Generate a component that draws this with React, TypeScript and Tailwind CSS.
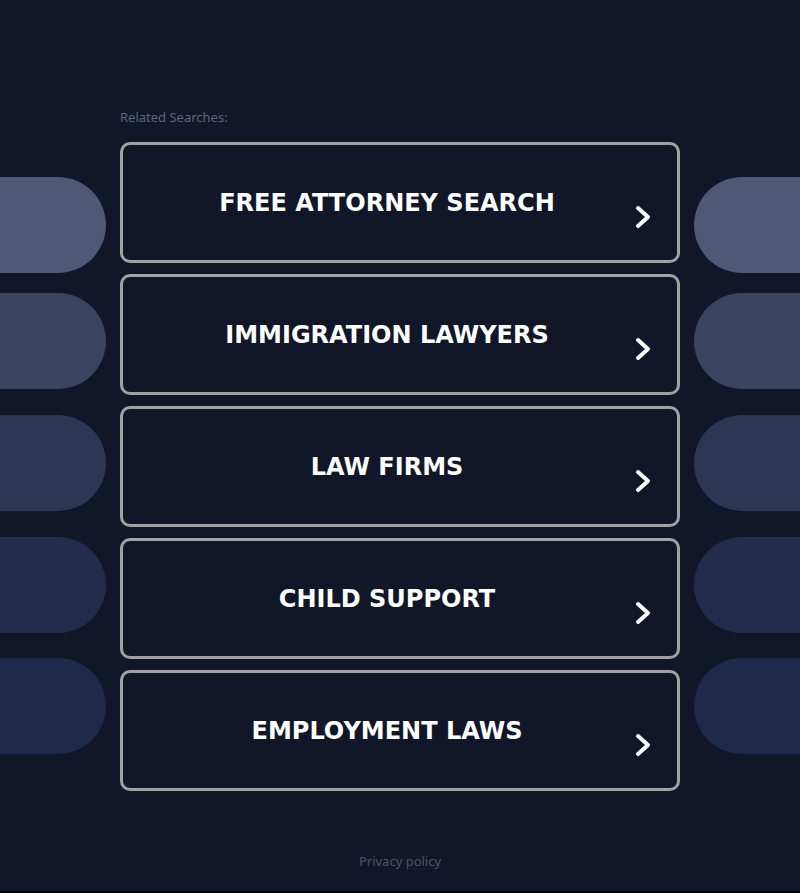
const searches = [
  'FREE ATTORNEY SEARCH',
  'IMMIGRATION LAWYERS',
  'LAW FIRMS',
  'CHILD SUPPORT',
  'EMPLOYMENT LAWS',
]

const pills = [
  { color: 'bg-[#4f5874]', mt: 'mt-[177px]' },
  { color: 'bg-[#3b445f]', mt: 'mt-[20px]' },
  { color: 'bg-[#2d3653]', mt: 'mt-[26px]' },
  { color: 'bg-[#232c4c]', mt: 'mt-[26px]' },
  { color: 'bg-[#1f2949]', mt: 'mt-[25px]' },
]

function Chevron() {
  return (
    <svg width="16" height="24" viewBox="0 0 16 24" fill="none" className="shrink-0">
      <path d="M3 3 L13 12 L3 21" stroke="white" strokeWidth="4" strokeLinecap="round" strokeLinejoin="round" />
    </svg>
  )
}

function PillColumn({ side }: { side: 'left' | 'right' }) {
  return (
    <div className="flex flex-col w-[106px] shrink-0">
      {pills.map((p, i) => (
        <div
          key={i}
          className={
            side === 'left'
              ? `${p.mt} ${p.color} h-[96px] w-full rounded-r-[48px]`
              : `${p.mt} ${p.color} h-[96px] w-full rounded-l-[48px]`
          }
        />
      ))}
    </div>
  )
}

export default function App() {
  return (
    <div className="h-[893px] w-full bg-[#111729] overflow-hidden border-b-2 border-black font-['DejaVu_Sans',sans-serif]">
      <div className="flex h-[853px]">
        <PillColumn side="left" />
        <div className="flex-1 px-[14px]">
          <p className="mt-[109px] h-[21px] text-[13px] leading-[16px] text-[#5d6579] font-['Noto_Sans',sans-serif]">
            Related Searches:
          </p>
          <ul className="mt-[12px] flex flex-col gap-[11px]">
            {searches.map((s) => (
              <li key={s}>
                <a className="relative flex h-[121px] items-center justify-center rounded-[10px] border-[3px] border-[#a2a2a4] bg-[#111729] cursor-pointer">
                  <span className="pr-[26px] text-[24px] font-bold text-white">
                    {s}
                  </span>
                  <span className="absolute right-[26px] top-[60px]">
                    <Chevron />
                  </span>
                </a>
              </li>
            ))}
          </ul>
        </div>
        <PillColumn side="right" />
      </div>
      <p className="text-center text-[13px] leading-[16px] text-[#4c556b] font-['Noto_Sans',sans-serif]">
        Privacy policy
      </p>
    </div>
  )
}
